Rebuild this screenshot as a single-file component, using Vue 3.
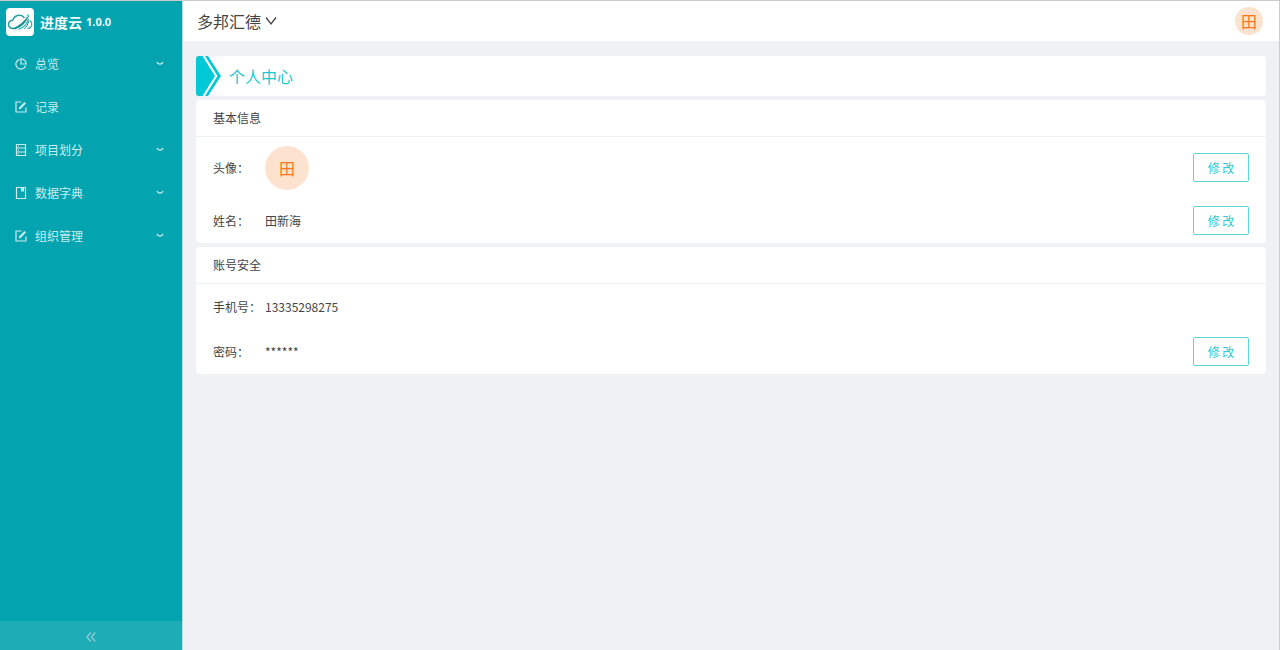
<script setup>
import { ref } from 'vue'

const collapsed = ref(false)
const menu = [
  { label: '总览', icon: 'pie', more: true },
  { label: '记录', icon: 'edit', more: false },
  { label: '项目划分', icon: 'rows', more: true },
  { label: '数据字典', icon: 'book', more: true },
  { label: '组织管理', icon: 'edit', more: true },
]
</script>

<template>
  <div class="app">
    <aside class="side" :class="{ collapsed }">
      <div class="brand">
        <span class="logo">
          <svg viewBox="0 0 28 28" width="28" height="28" fill="none" stroke-linecap="round">
            <path d="M10 20.500H7.500C4.500 20.500 2.500 18.800 2.500 16.300c0-2.200 1.700-3.700 4.200-4C7.800 9.300 10.500 7.300 13.800 7.300c1.800 0 3.300.8 4.200 2.200" stroke="#279ca0" stroke-width="1.500" />
            <path d="M24 12.500c2 1.700 2.300 4.700.8 6.500-.6.800-1.500 1.300-2.800 1.400" stroke="#3fb0ad" stroke-width="1.300" />
            <path d="M7.500 20.600C14 20.200 19.500 16 21.800 8.500 18.500 13.500 14 17.500 7.500 20.600z" fill="#178c92" stroke="#178c92" stroke-width=".8" />
            <path d="M13 21c4.500-1.200 8-4.500 9.300-10" stroke="#49bdb0" stroke-width="1.300" />
            <path d="M18.500 20.500c2-1.300 3.500-3.500 4-7" stroke="#178c92" stroke-width="1" />
            <path d="M20.500 8l1.800-1.800.3 3" stroke="#5bc8b4" stroke-width="1" />
          </svg>
        </span>
        <strong class="name">进度云</strong>
        <strong class="version">1.0.0</strong>
      </div>
      <nav class="menu">
        <a v-for="item in menu" :key="item.label" class="item" href="#">
          <svg viewBox="0 0 12 12" width="12" height="12" fill="none" stroke="currentColor">
            <template v-if="item.icon === 'pie'">
              <path d="M4.500 1.300A5 5 0 1 0 10.700 7.500" stroke-width="1.200" />
              <path d="M6 .8V6h5.200A5.200 5.200 0 0 0 6 .8z" stroke-width="1.200" />
            </template>
            <template v-else-if="item.icon === 'edit'">
              <path d="M6.500 1H1v10h10V6.500" stroke-width="1.200" />
              <path d="M4.300 7.700L10.300 1.700" stroke-width="2.200" />
            </template>
            <template v-else-if="item.icon === 'rows'">
              <path d="M1.500.5h9v11h-9zM1.500 4h9M1.500 8h9" stroke-width="1.200" />
              <path d="M3 2.300h1M3 6h1M3 9.800h1" />
            </template>
            <template v-else>
              <path d="M1.500.5h9v11h-9z" stroke-width="1.200" />
              <path d="M6 1h3v4L7.500 4 6 5z" fill="currentColor" stroke="none" />
            </template>
          </svg>
          <span class="label">{{ item.label }}</span>
          <svg v-if="item.more" class="arrow" viewBox="0 0 8 8" width="8" height="8" fill="none" stroke="currentColor" stroke-width="1.200">
            <path d="M.8 2.200Q4 6.200 7.200 2.200" />
          </svg>
        </a>
      </nav>
      <button class="fold" type="button" aria-label="收起菜单" @click="collapsed = !collapsed">
        <svg viewBox="0 0 10 10" width="10" height="10" fill="none" stroke="currentColor" stroke-width="1.300">
          <path d="M4.800.5L1 5l3.800 4.500M9.300.5L5.500 5l3.800 4.500" />
        </svg>
      </button>
    </aside>

    <div class="body">
      <header class="top">
        <button class="org" type="button">
          多邦汇德
          <svg viewBox="0 0 12 10" width="12" height="10" fill="none" stroke="currentColor" stroke-width="1.300">
            <path d="M1 1.500l5 6.500 5-6.500" />
          </svg>
        </button>
        <span class="avatar small">田</span>
      </header>

      <main class="main">
        <div class="banner">
          <svg viewBox="0 0 26 40" width="26" height="40" fill="#00c8d4">
            <path d="M3 0H6.500L19 20 6.500 40H3Q0 40 0 37V3Q0 0 3 0z" />
            <path d="M9 0H12L25 20 12 40H9L21.500 20z" />
          </svg>
          <h1>个人中心</h1>
        </div>

        <section class="card">
          <h2>基本信息</h2>
          <div class="row tall">
            <span class="key">头像：</span>
            <span class="avatar">田</span>
            <button class="edit" type="button">修 改</button>
          </div>
          <div class="row">
            <span class="key">姓名：</span>
            <span>田新海</span>
            <button class="edit" type="button">修 改</button>
          </div>
        </section>

        <section class="card">
          <h2>账号安全</h2>
          <div class="row">
            <span class="key">手机号：</span>
            <span>13335298275</span>
          </div>
          <div class="row">
            <span class="key">密码：</span>
            <span>******</span>
            <button class="edit" type="button">修 改</button>
          </div>
        </section>
      </main>
    </div>
  </div>
</template>

<style>
body {
  background: #f0f1f5;
}
</style>

<style scoped>
.app {
  display: flex;
  box-sizing: border-box;
  min-height: 100vh;
  border-top: 1px solid #cbcbcb;
  border-right: 1px solid #cbcbcb;
  background: #f0f1f5;
  color: #444;
  font: 12px/20px "Noto Sans CJK SC", sans-serif;
}
button {
  font: inherit;
  cursor: pointer;
}
svg {
  display: block;
  flex: none;
}
.side {
  display: flex;
  flex: none;
  flex-direction: column;
  box-sizing: border-box;
  width: 183px;
  border-right: 1px solid #b5dde2;
  background: #03a4af;
  color: #c9eef0;
}
.brand {
  display: flex;
  align-items: center;
  height: 41px;
  padding-left: 6px;
  color: #f0fcfc;
}
.logo {
  border-radius: 4px;
  background: #fff;
}
.name {
  margin: 0 4px 0 6px;
  font-size: 14px;
}
.version {
  font-family: "Noto Sans", sans-serif;
  font-size: 11px;
}
.item {
  display: flex;
  align-items: center;
  height: 43px;
  padding: 0 18px 0 15px;
  color: inherit;
  text-decoration: none;
}
.label {
  flex: 1;
  margin-left: 8px;
}
.fold {
  display: flex;
  align-items: center;
  justify-content: center;
  height: 29px;
  margin-top: auto;
  padding: 3px 0 0;
  border: 0;
  background: #1eacb6;
  color: #8ecdd0;
}
.collapsed {
  width: 43px;
}
.collapsed .name,
.collapsed .version,
.collapsed .label,
.collapsed .arrow {
  display: none;
}
.body {
  flex: 1;
  min-width: 0;
}
.top {
  display: flex;
  align-items: center;
  justify-content: space-between;
  height: 40px;
  padding: 0 16px 0 14px;
  background: #fff;
}
.org {
  display: flex;
  align-items: center;
  gap: 4px;
  padding: 0;
  border: 0;
  background: none;
  color: #444;
  font-size: 16px;
}
.avatar {
  display: flex;
  align-items: center;
  justify-content: center;
  width: 44px;
  height: 44px;
  border-radius: 50%;
  background: #fde3cf;
  color: #f5771f;
  font-size: 16px;
}
.avatar.small {
  width: 28px;
  height: 28px;
}
.main {
  display: flex;
  flex-direction: column;
  gap: 4px;
  padding: 15px 13px;
}
.banner,
.card {
  border-radius: 4px;
  background: #fff;
}
.banner {
  display: flex;
  align-items: center;
  gap: 7px;
  height: 40px;
}
h1 {
  margin: 0;
  color: #1ac8d3;
  font-size: 16px;
  font-weight: 400;
}
h2 {
  margin: 0;
  padding: 8px 17px;
  border-bottom: 1px solid #eeeff2;
  font-size: 12px;
  font-weight: 400;
}
.row {
  display: flex;
  align-items: center;
  height: 45px;
  padding: 0 17px;
}
.row.tall {
  height: 61px;
}
.key {
  width: 52px;
}
.edit {
  margin-left: auto;
  width: 56px;
  height: 29px;
  padding: 0;
  border: 1px solid #5fd6de;
  border-radius: 2px;
  background: #fff;
  color: #2cc7d2;
}
</style>
